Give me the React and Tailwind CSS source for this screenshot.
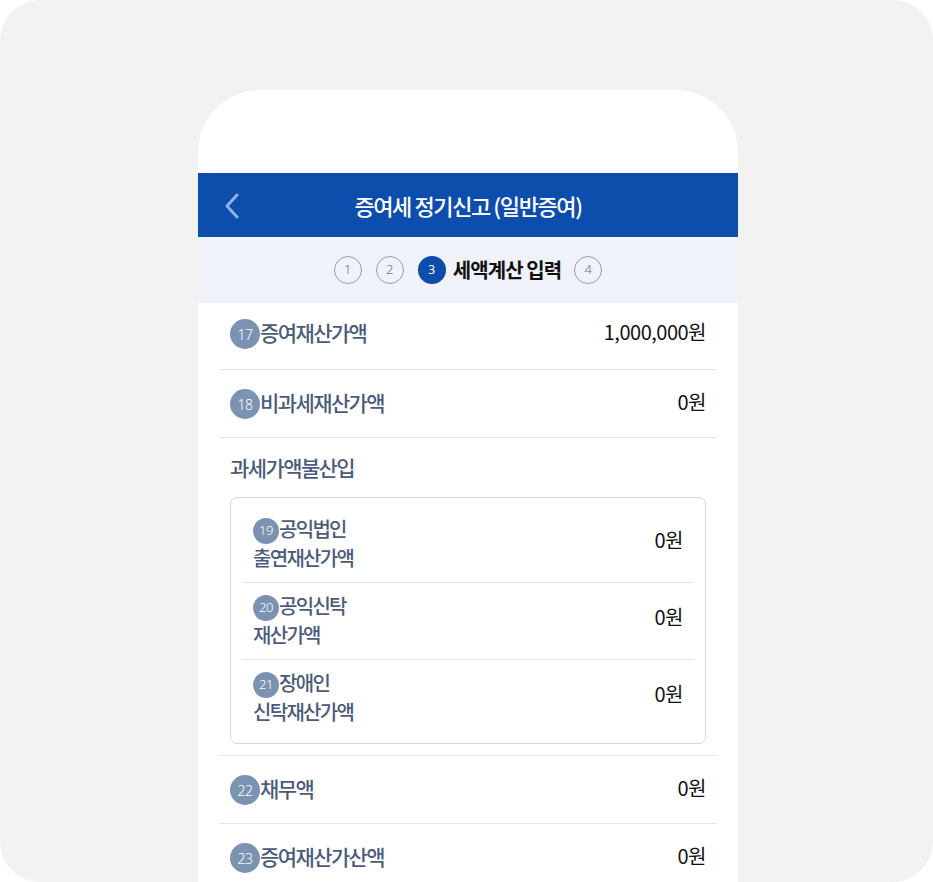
import React from "react";

const KR = { fontFamily: '"Noto Sans CJK KR", "Noto Sans", sans-serif' };

function Badge({ n, small }) {
  return (
    <span
      className={
        "shrink-0 rounded-full bg-[#7b93b2] text-white flex items-center justify-center font-light " +
        (small ? "w-[26px] h-[26px] text-[13px] translate-y-[2px]" : "w-[30px] h-[30px] text-[14px] translate-y-[2px]")
      }
      style={{ fontFamily: '"Noto Sans", sans-serif', letterSpacing: "-0.5px" }}
    >
      {n}
    </span>
  );
}

function Row({ n, label, value, first }) {
  return (
    <div
      className={
        "flex items-center justify-between px-[11px] border-b border-[#e3e4ea] " +
        (first ? "pt-[14px] pb-[22px]" : "pt-[17px] pb-[20px]")
      }
    >
      <div className="flex items-center h-[30px]">
        <Badge n={n} />
        <span className="text-[21px] leading-[30px] text-[#4b5c7a] font-medium tracking-[-1.6px]">{label}</span>
      </div>
      <span className="text-[20px] leading-[30px] text-[#111] tracking-[-0.5px]">{value}</span>
    </div>
  );
}

function InnerRow({ n, l1, l2, value, last }) {
  return (
    <div
      className={
        "flex items-center justify-between px-[11px] pt-[8px] pb-[10px] " +
        (last ? "" : "border-b border-[#e3e4ea]")
      }
    >
      <div className="flex flex-col">
        <div className="flex items-center h-[29px]">
          <Badge n={n} small />
          <span className="text-[20px] leading-[29px] text-[#4b5c7a] font-medium tracking-[-1.7px]">{l1}</span>
        </div>
        <span className="text-[20px] leading-[29px] text-[#4b5c7a] font-medium tracking-[-1.7px]">{l2}</span>
      </div>
      <span className="text-[20px] leading-[30px] text-[#111] tracking-[-0.5px] mb-[6px]">{value}</span>
    </div>
  );
}

function StepCircle({ n }) {
  return (
    <span
      className="w-[28px] h-[28px] rounded-full border border-[#9c9da7] text-[#6f707a] text-[13px] flex items-center justify-center font-light"
      style={{ fontFamily: '"Noto Sans", sans-serif' }}
    >
      {n}
    </span>
  );
}

export default function App() {
  return (
    <div className="w-[933px] h-[882px] bg-white" style={KR}>
      <div className="h-full rounded-[40px] bg-[#f2f2f2] flex justify-center pt-[90px] pl-[3px] overflow-hidden">
        <div className="w-[540px] bg-white rounded-t-[62px] flex flex-col pt-[83px] overflow-hidden">
          {/* header */}
          <div className="h-[64px] bg-[#0d4ead] flex items-center relative shrink-0">
            <svg
              className="absolute left-[26px] top-[20px]"
              width="16"
              height="26"
              viewBox="0 0 16 26"
              fill="none"
            >
              <polyline points="13,2 3,13 13,24" stroke="#8eb1e6" strokeWidth="3" strokeLinecap="round" strokeLinejoin="round" />
            </svg>
            <div className="flex-1 text-center text-white text-[22px] font-medium tracking-[-1.4px]">
              증여세 정기신고 (일반증여)
            </div>
          </div>
          {/* steps */}
          <div className="h-[66px] bg-[#f0f2f9] flex items-center justify-center shrink-0">
            <StepCircle n="1" />
            <span className="w-[14px]" />
            <StepCircle n="2" />
            <span className="w-[14px]" />
            <span
              className="w-[28px] h-[28px] rounded-full bg-[#0d4ead] text-white text-[12px] flex items-center justify-center"
              style={{ fontFamily: '"Noto Sans", sans-serif' }}
            >
              3
            </span>
            <span className="ml-[7px] mr-[13px] text-[20px] font-bold text-[#111] tracking-[-0.9px] leading-[28px]">
              세액계산 입력
            </span>
            <StepCircle n="4" />
          </div>
          {/* content */}
          <div className="mx-[21px] flex flex-col">
            <Row n="17" label="증여재산가액" value="1,000,000원" first />
            <Row n="18" label="비과세재산가액" value="0원" />
            <div className="border-b border-[#e3e4ea] pt-[14px] pb-[11px]">
              <div className="px-[11px] text-[21px] leading-[30px] text-[#4b5c7a] font-medium tracking-[-1.6px]">
                과세가액불산입
              </div>
              <div className="mt-[15px] mx-[11px] border border-[#d6d7dc] rounded-[7px] px-[11px] pt-[8px] pb-[7px]">
                <InnerRow n="19" l1="공익법인" l2="출연재산가액" value="0원" />
                <InnerRow n="20" l1="공익신탁" l2="재산가액" value="0원" />
                <InnerRow n="21" l1="장애인" l2="신탁재산가액" value="0원" last />
              </div>
            </div>
            <Row n="22" label="채무액" value="0원" />
            <Row n="23" label="증여재산가산액" value="0원" />
          </div>
        </div>
      </div>
    </div>
  );
}
